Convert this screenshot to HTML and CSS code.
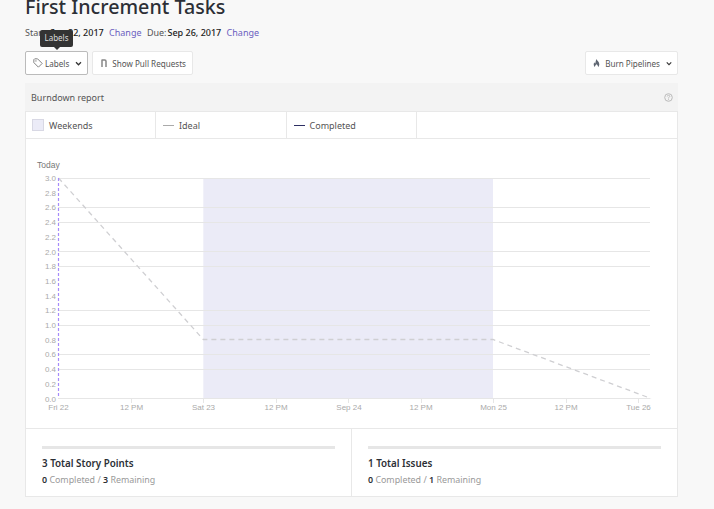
FILE: index.html
```html
<!DOCTYPE html>
<html lang="en">
<head>
    <meta charset="UTF-8">
    <title>First Increment Tasks</title>
    <link rel="stylesheet" href="styles.css">
</head>
<body>
    <div class="page">
        <h1 class="title">First Increment Tasks</h1>
        <p class="dates">
            <span class="muted">Start:</span> <b>Sep 22, 2017</b> <a class="change">Change</a>
            <span class="muted due">Due:</span><b class="due-date">Sep 26, 2017</b> <a class="change">Change</a>
        </p>

        <div class="toolbar">
            <div class="btn btn-labels">
                <svg class="icon" width="10" height="10" viewBox="0 0 12 12"><path d="M1 2v3.500L6.500 11 11 6.500 5.500 1H2z" fill="none" stroke="#777" stroke-width="1.100"/><circle cx="3.500" cy="3.500" r=".8" fill="#777"/></svg>
                Labels
                <svg class="caret" width="7" height="5" viewBox="0 0 8 6"><path d="M1 1.500l3 3 3-3" fill="none" stroke="#333" stroke-width="1.500"/></svg>
                <div class="tooltip">Labels</div>
            </div>
            <div class="btn btn-pulls">
                <svg class="icon" width="6" height="8" viewBox="0 0 6 8"><path d="M1 .5V8M1 1h2.800Q5 1 5 2.200V8" fill="none" stroke="#888" stroke-width="1.500"/></svg>
                Show Pull Requests
            </div>
            <div class="btn btn-burn">
                <svg class="icon" width="7" height="8" viewBox="0 0 8 10"><path d="M4 0c.5 2 3.500 3.500 3.500 6.500 0 1.500-.5 2.500-1.500 3.500 0-1.500-.8-2.500-2-3.500C3 7.500 2 8.500 2 10 1 9 .5 8 .5 6.500c0-1 .5-2 1-2.500 0 1 .5 1.500 1 1.500C3 4 3 2 4 0z" fill="#5f6672"/></svg>
                Burn Pipelines
                <svg class="caret" width="6" height="5" viewBox="0 0 8 6"><path d="M1 1.500l3 3 3-3" fill="none" stroke="#333" stroke-width="1.500"/></svg>
            </div>
        </div>

        <div class="report-head">
            <span>Burndown report</span>
            <svg width="9" height="9" viewBox="0 0 9 9"><circle cx="4.500" cy="4.500" r="3.800" fill="none" stroke="#bbb" stroke-width="1"/><path d="M3.200 3.500q0-1.200 1.300-1.200t1.300 1.100q0 .7-1.300 1.300v.8M4.500 6.200v.9" fill="none" stroke="#bbb" stroke-width=".9"/></svg>
        </div>

        <div class="report">
            <div class="legend">
                <div class="legend-item"><i class="swatch"></i>Weekends</div>
                <div class="legend-item legend-line"><i class="dash dash-ideal"></i>Ideal</div>
                <div class="legend-item legend-line"><i class="dash dash-done"></i>Completed</div>
            </div>

            <svg class="chart" width="651" height="289" viewBox="26 139 651 289">
                <rect x="203.300" y="178" width="289.700" height="220" fill="#ebebf7"/>
                <g stroke="#e6e6e6" stroke-width="1">
                    <path d="M58 178.500H650M58 207.500H650M58 222.500H650M58 251.500H650M58 266.500H650M58 310.500H650M58 325.500H650M58 354.500H650M58 369.500H650M58 398.500H650"/>
                    <path d="M131.500 398v5M203.500 398v5M276.500 398v5M348.500 398v5M421.500 398v5M493.500 398v5M566.500 398v5M638.500 398v5"/>
                </g>
                <path d="M58.500 178 203.300 339.500H493L651 398.500" fill="none" stroke="#cfcfd2" stroke-width="1.300" stroke-dasharray="5 4"/>
                <path d="M58.500 178V398" stroke="#a78bfa" stroke-width="1.200" stroke-dasharray="3 2"/>
                <text class="today" x="37" y="168">Today</text>
                <g class="y-labels" text-anchor="end">
                    <text x="56" y="181">3.0</text><text x="56" y="195.500">2.8</text>
                    <text x="56" y="210">2.6</text><text x="56" y="225">2.4</text>
                    <text x="56" y="239.500">2.2</text><text x="56" y="254.500">2.0</text>
                    <text x="56" y="269">1.8</text><text x="56" y="283.500">1.6</text>
                    <text x="56" y="298.500">1.4</text><text x="56" y="313">1.2</text>
                    <text x="56" y="328">1.0</text><text x="56" y="342.500">0.8</text>
                    <text x="56" y="357">0.6</text><text x="56" y="372">0.4</text>
                    <text x="56" y="386.500">0.2</text><text x="56" y="401.500">0.0</text>
                </g>
                <g class="x-labels" text-anchor="middle">
                    <text x="58.500" y="410">Fri 22</text><text x="131.500" y="410">12 PM</text>
                    <text x="203.500" y="410">Sat 23</text><text x="276" y="410">12 PM</text>
                    <text x="349" y="410">Sep 24</text><text x="421" y="410">12 PM</text>
                    <text x="493.500" y="410">Mon 25</text><text x="566" y="410">12 PM</text>
                    <text x="638.500" y="410">Tue 26</text>
                </g>
            </svg>

            <div class="stats">
                <div class="stat">
                    <div class="bar"></div>
                    <div class="stat-title">3 Total Story Points</div>
                    <div class="stat-sub"><b>0</b> Completed / <b>3</b> Remaining</div>
                </div>
                <div class="stat">
                    <div class="bar"></div>
                    <div class="stat-title">1 Total Issues</div>
                    <div class="stat-sub"><b>0</b> Completed / <b>1</b> Remaining</div>
                </div>
            </div>
        </div>
    </div>
</body>
</html>
```

FILE: styles.css
```css
html, body {
    margin: 0;
    padding: 0;
    height: 509px;
    overflow: hidden;
}
body {
    font-family: "Noto Sans", sans-serif;
    font-size: 9px;
    color: #333;
    background-color: #f8f8f8;
}
.page {
    width: 653px;
    margin-left: 25px;
}
.title {
    margin: -7px 0 0;
    font-size: 19.7px;
    line-height: 27px;
    font-weight: 500;
    color: #2c2f36;
}
.dates {
    margin: 6px 0 0;
    height: 13px;
    line-height: 13px;
    font-size: 9px;
    white-space: nowrap;
    color: #555;
}
.dates b {
    font-weight: 500;
    color: #222;
}
.change {
    color: #6b5fc0;
    margin-left: 3px;
}
.due {
    margin-left: 3px;
}
.due-date {
    margin-left: 1px;
}
.toolbar {
    display: flex;
    gap: 4px;
    margin-top: 12px;
}
.btn {
    position: relative;
    display: flex;
    align-items: center;
    height: 22px;
    background: #fff;
    border: 1px solid #e8e8e8;
    border-radius: 2px;
    font-size: 8.1px;
    color: #555;
    white-space: nowrap;
}
.btn-labels {
    padding: 0 5px 0 7px;
    border-color: #bbb;
}
.btn-labels .icon {
    margin-right: 2px;
}
.btn-pulls {
    padding: 0 6px 0 8px;
}
.btn-burn {
    margin-left: auto;
    padding: 0 5px 0 7px;
}
.icon {
    margin-right: 5px;
}
.caret {
    margin-left: 6px;
}
.tooltip {
    position: absolute;
    left: 14px;
    top: -22px;
    width: 33px;
    height: 17px;
    line-height: 15px;
    text-align: center;
    font-size: 8px;
    color: #ddd;
    background: #333;
    border-radius: 2px;
}
.tooltip::after {
    content: "";
    position: absolute;
    left: 14px;
    bottom: -3px;
    border-left: 3px solid transparent;
    border-right: 3px solid transparent;
    border-top: 3px solid #333;
}
.report-head {
    display: flex;
    align-items: center;
    justify-content: space-between;
    height: 28px;
    margin-top: 8px;
    padding: 0 5px 0 6px;
    background: #f3f3f3;
    color: #555;
}
.report {
    background: #fff;
    border: 1px solid #e8e8e8;
}
.legend {
    display: flex;
    height: 26px;
    border-bottom: 1px solid #e8e8e8;
}
.legend-item {
    box-sizing: border-box;
    display: flex;
    align-items: center;
    width: 130px;
    padding-left: 6px;
    border-right: 1px solid #e8e8e8;
    color: #555;
}
.legend-line {
    width: 130.500px;
    padding-left: 7px;
}
.swatch {
    box-sizing: border-box;
    width: 12px;
    height: 12px;
    margin-right: 5px;
    background: #ebebf7;
    border: 1px solid #d8d8e4;
}
.dash {
    width: 11px;
    height: 1px;
    margin-right: 5px;
}
.dash-ideal {
    background: #aaa;
}
.dash-done {
    background: #2d2f63;
}
.chart {
    display: block;
}
.chart text {
    font-family: "Liberation Sans", sans-serif;
    font-size: 8px;
    fill: #aaa;
}
.chart .today {
    fill: #777;
    font-size: 8.5px;
}
.stats {
    display: flex;
    border-top: 1px solid #e8e8e8;
    height: 67px;
}
.stat {
    flex: 1;
    padding: 17px 16px 0;
}
.stat + .stat {
    border-left: 1px solid #e8e8e8;
}
.bar {
    height: 3px;
    background: #e6e6e6;
}
.stat-title {
    margin-top: 8px;
    font-size: 9.800px;
    line-height: 14px;
    font-weight: 600;
    color: #2c2f36;
}
.stat-sub {
    margin-top: 2px;
    font-size: 8.900px;
    line-height: 14px;
    color: #999;
}
.stat-sub b {
    font-weight: 600;
    color: #2c2f36;
}
```
